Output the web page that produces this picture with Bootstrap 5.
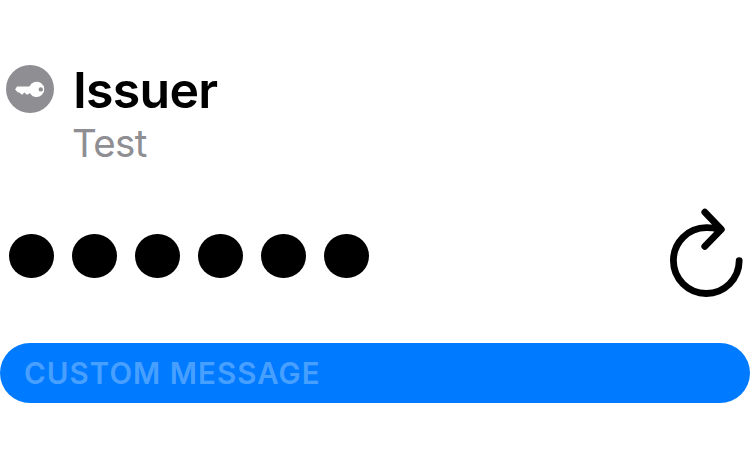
<!DOCTYPE html>
<html lang="en">
<head>
<meta charset="utf-8">
<meta name="viewport" content="width=device-width, initial-scale=1">
<title>Issuer</title>
<link href="https://cdn.jsdelivr.net/npm/bootstrap@5.3.0/dist/css/bootstrap.min.css" rel="stylesheet">
<style>
body { font-family: Inter, "Liberation Sans", sans-serif; background: #fff; color: #000; }
.token { height: 450px; padding-top: 65px; }
.token-head { height: 143px; padding-left: 6px; gap: 19px; }
.key-icon { width: 48px; height: 48px; }
.issuer { font-size: 50px; font-weight: 600; line-height: 60px; letter-spacing: -.75px; margin-top: -5px; }
.account { font-size: 38.5px; line-height: 46px; letter-spacing: -.6px; margin-left: -1px; color: #8e8e93; }
.code-row { height: 90px; padding: 0 7px 0 9px; margin-bottom: 45px; }
.dots { gap: 18.2px; padding-top: 6px; }
.dot { width: 44.8px; height: 44.8px; background: #000; }
.message { height: 60px; padding: 0 0 0 24px; background: #007aff; color: rgba(255,255,255,.3); font-size: 29.5px; font-weight: 600; letter-spacing: 1.05px; }
</style>
</head>
<body class="overflow-hidden">
<main class="token d-flex flex-column">
  <header class="token-head d-flex align-items-start">
    <svg class="key-icon flex-shrink-0" viewBox="0 0 48 48" aria-hidden="true">
      <circle cx="24" cy="24" r="24" fill="#8e8e93"/>
      <path fill="#fff" fill-rule="evenodd" d="M11 21.6H23.4A7.7 7.7 0 1 1 23.8 28L22 29.6H20.6L18.3 27.4 16.5 29.6H15.5L13.4 27.4H12L9.1 24.6ZM34.8 22.2a2.2 2.2 0 1 0 0 4.4a2.2 2.2 0 1 0 0-4.4Z"/>
    </svg>
    <div>
      <h1 class="issuer mb-0">Issuer</h1>
      <p class="account mb-0">Test</p>
    </div>
  </header>
  <section class="code-row d-flex justify-content-between align-items-center">
    <div class="dots d-flex">
      <span class="dot rounded-circle"></span><span class="dot rounded-circle"></span><span class="dot rounded-circle"></span><span class="dot rounded-circle"></span><span class="dot rounded-circle"></span><span class="dot rounded-circle"></span>
    </div>
    <button class="btn p-0 border-0 lh-1" type="button" aria-label="Refresh">
      <svg class="d-block" width="74" height="90" viewBox="0 0 74 90" fill="none" stroke="#000" stroke-width="6.8" stroke-linecap="round" stroke-linejoin="round">
        <path d="M70.2 52.6A32.9 32.9 0 1 1 37.3 19.7Q43.5 19.6 50 21.2M35.8 4.1L52.3 21.4L35.8 38.4"/>
      </svg>
    </button>
  </section>
  <footer class="message rounded-pill d-flex align-items-center text-uppercase">Custom message</footer>
</main>
<script src="https://cdn.jsdelivr.net/npm/bootstrap@5.3.0/dist/js/bootstrap.bundle.min.js"></script>
</body>
</html>
